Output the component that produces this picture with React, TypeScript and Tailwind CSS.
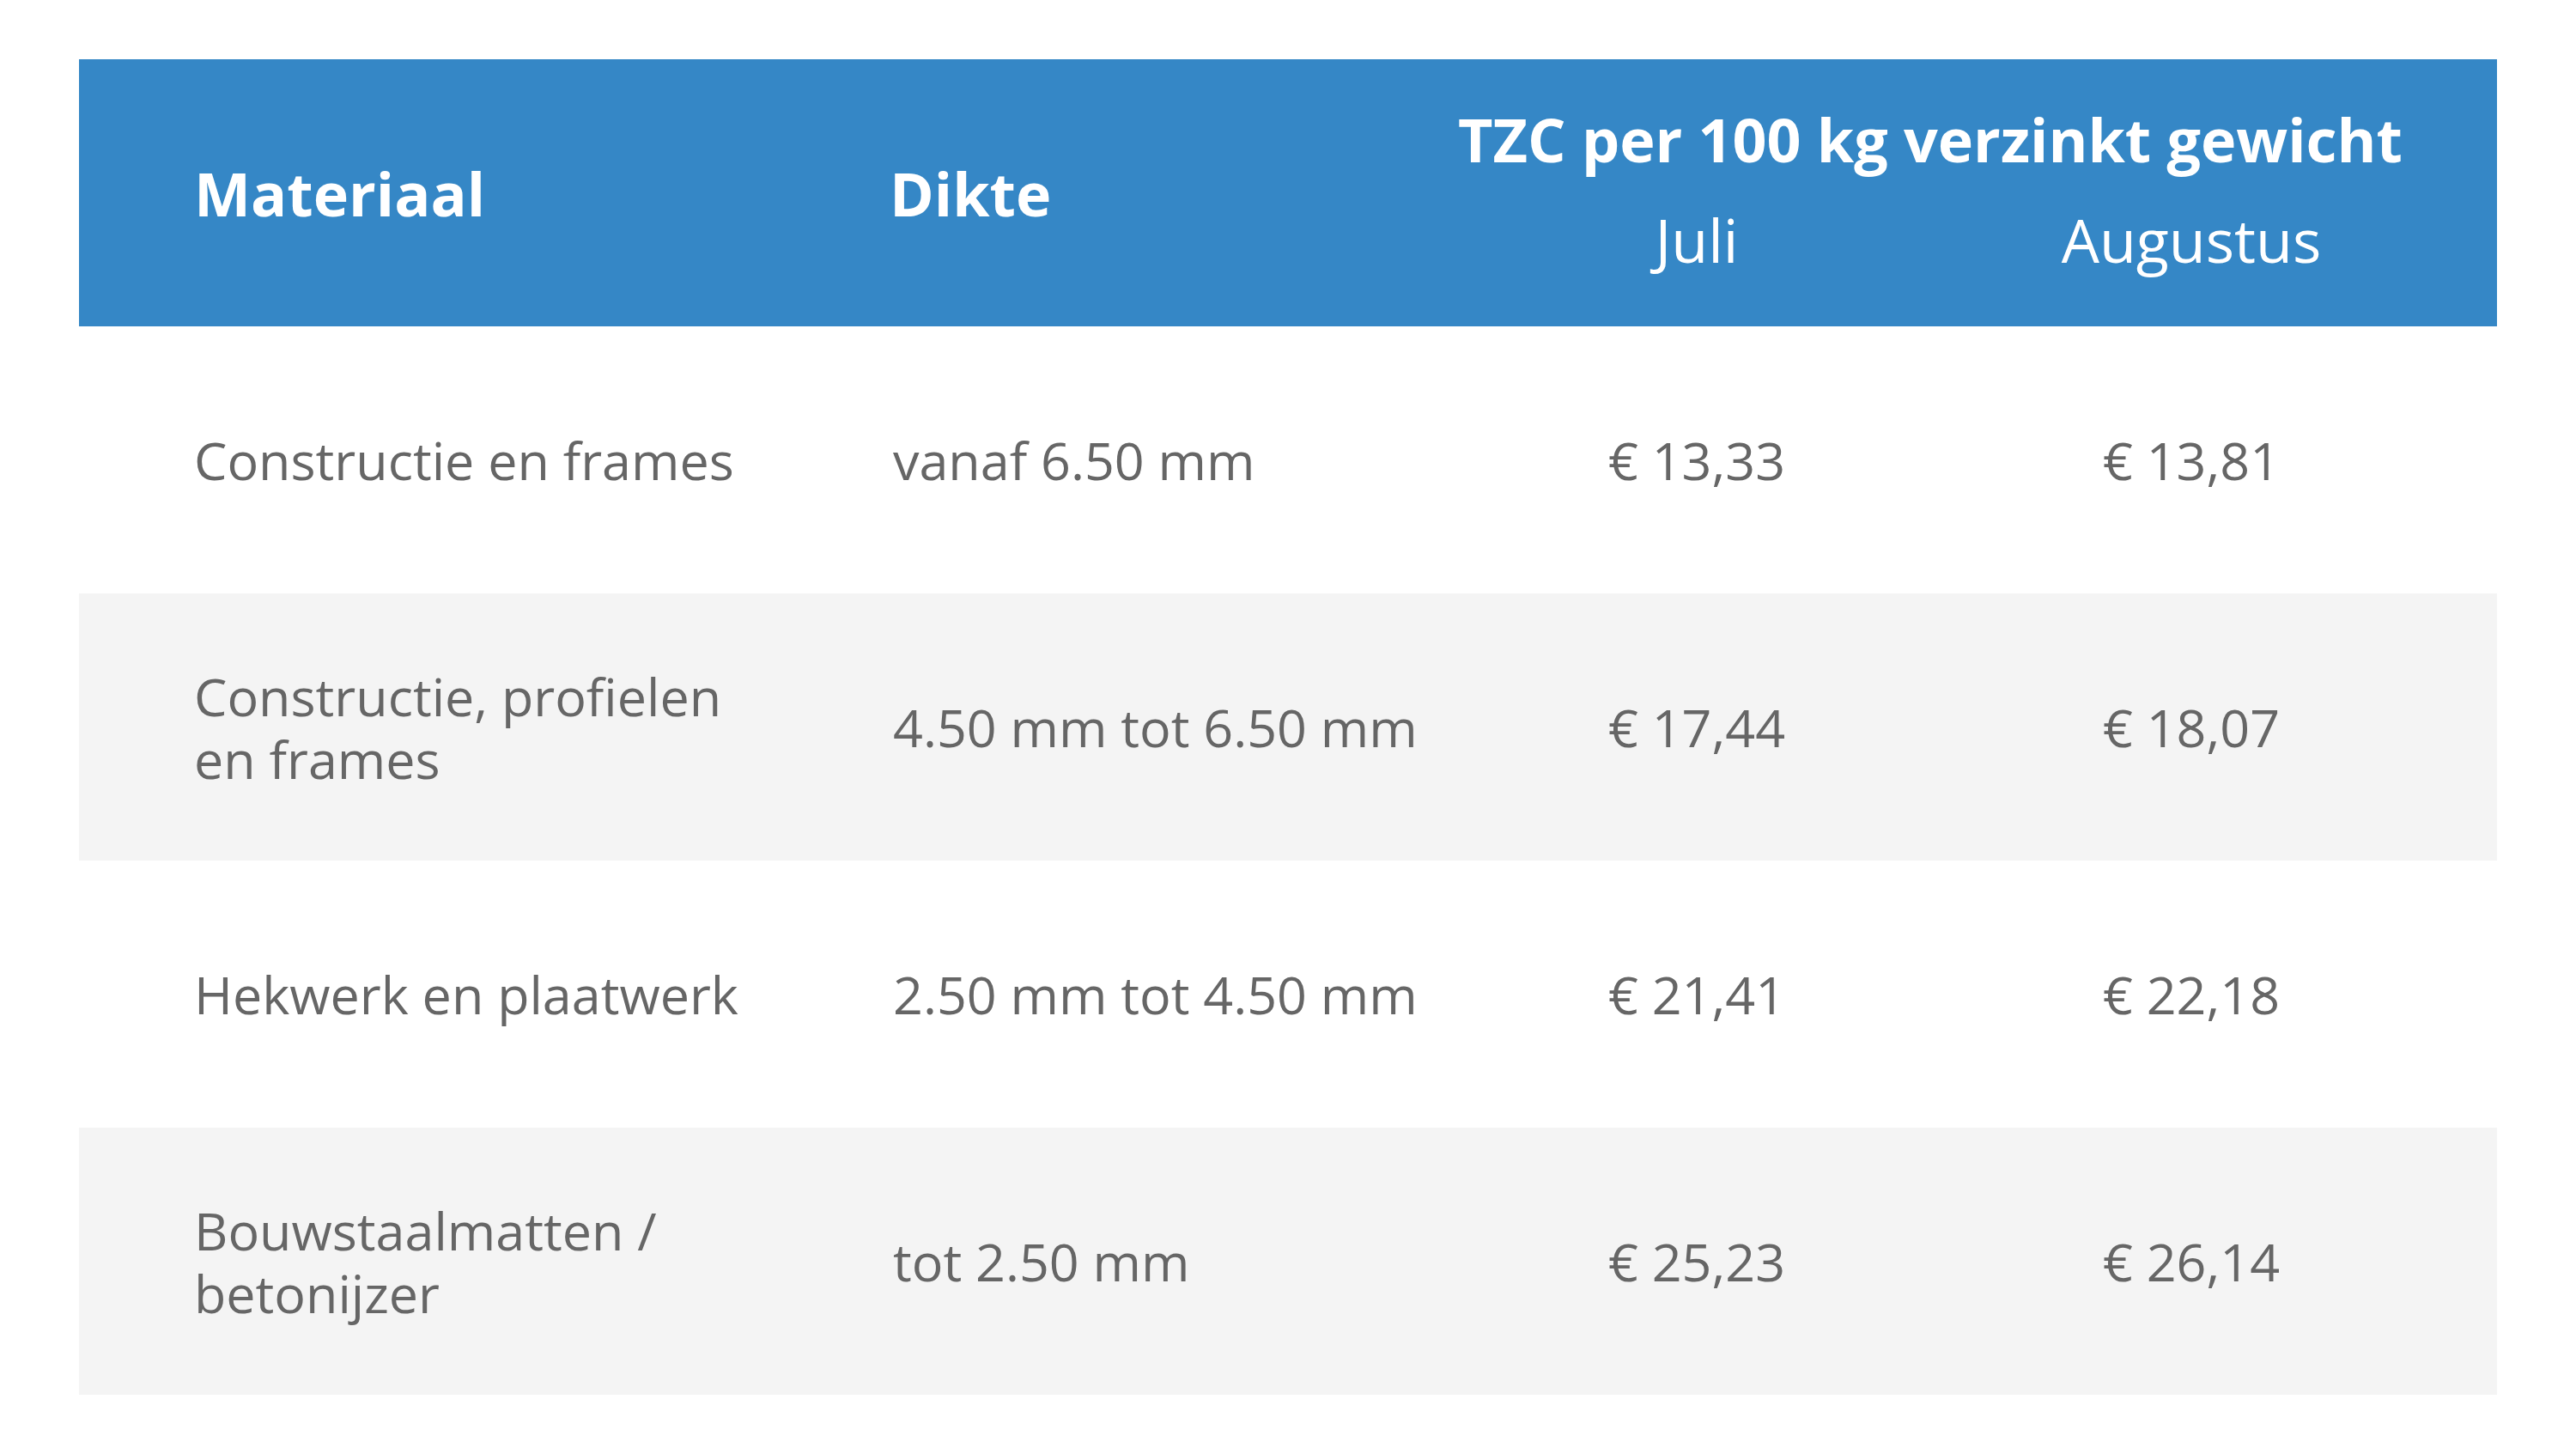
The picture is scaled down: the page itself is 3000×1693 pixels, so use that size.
import React from "react";

const rows = [
  { m: "Constructie en frames", d: "vanaf 6.50 mm", j: "€ 13,33", a: "€ 13,81" },
  { m: "Constructie, profielen en frames", d: "4.50 mm tot 6.50 mm", j: "€ 17,44", a: "€ 18,07" },
  { m: "Hekwerk en plaatwerk", d: "2.50 mm tot 4.50 mm", j: "€ 21,41", a: "€ 22,18" },
  { m: "Bouwstaalmatten / betonijzer", d: "tot 2.50 mm", j: "€ 25,23", a: "€ 26,14" },
];

export default function App() {
  return (
    <div
      className="w-[3000px] h-[1693px] bg-white pt-[69px] pl-[92px]"
      style={{ fontFamily: '"Open Sans", "Noto Sans", sans-serif' }}
    >
      <div className="w-[2816px]">
        <div className="h-[311px] bg-[#3587c6] pl-[134px] grid grid-cols-[814px_632px_1152px] items-center text-white">
          <div className="text-[70px] font-bold leading-[70px] pt-[1px]">Materiaal</div>
          <div className="text-[70px] font-bold leading-[70px] pt-[1px] -ml-[4px]">Dikte</div>
          <div className="flex flex-col pb-[8px]">
            <div className="text-[70px] font-bold leading-[117px] text-center">
              TZC per 100 kg verzinkt gewicht
            </div>
            <div className="grid grid-cols-[608px_544px] text-[70px] leading-[117px]">
              <div className="text-center">Juli</div>
              <div className="text-center">Augustus</div>
            </div>
          </div>
        </div>
        {rows.map((r, i) => (
          <div
            key={i}
            className={
              "h-[311px] pl-[134px] grid grid-cols-[814px_632px_608px_544px] items-center text-[61px] leading-[73px] text-[#666666] " +
              (i % 2 === 1 ? "bg-[#f4f4f4]" : "bg-white")
            }
          >
            <div className="max-w-[665px]">{r.m}</div>
            <div>{r.d}</div>
            <div className="text-center">{r.j}</div>
            <div className="text-center">{r.a}</div>
          </div>
        ))}
      </div>
    </div>
  );
}
